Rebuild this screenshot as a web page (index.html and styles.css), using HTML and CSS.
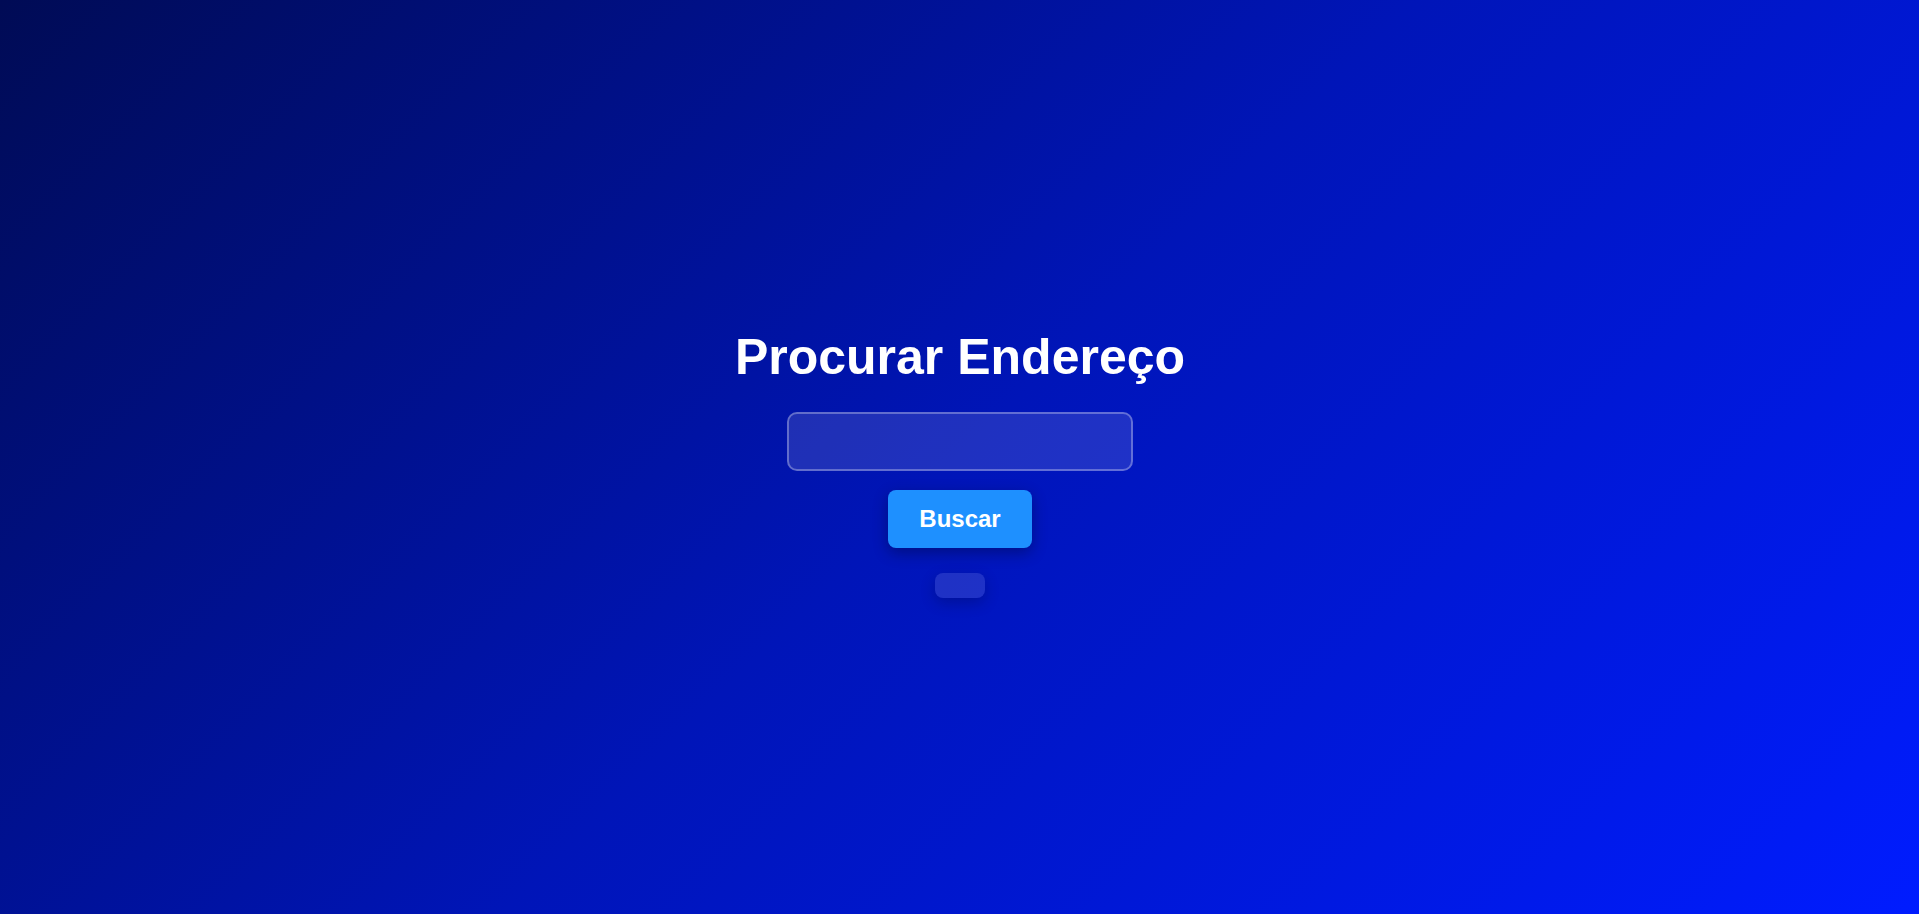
FILE: index.html
```html
<!DOCTYPE html>
<html lang="pt">
<head>
<meta charset="utf-8">
<title>Procurar Endereço</title>
<link rel="stylesheet" href="styles.css">
</head>
<body>
<main class="container">
  <h1 class="title">Procurar Endereço</h1>
  <input class="cep-input" type="text">
  <button class="search-btn" type="button">Buscar</button>
  <div class="result"></div>
</main>
</body>
</html>
```
FILE: styles.css
```css
html, body {
  margin: 0;
  padding: 0;
  height: 100%;
}
body {
  font-family: "Liberation Sans", Arial, sans-serif;
  background: linear-gradient(135deg, #000b55 0%, #0015b8 50%, #001cff 100%);
  color: #fff;
  display: flex;
  align-items: center;
  justify-content: center;
  min-height: 914px;
  padding-left: 1px;
  box-sizing: border-box;
}
.container {
  display: flex;
  flex-direction: column;
  align-items: center;
  margin-top: 12px;
}
.title {
  font-size: 50px;
  font-weight: bold;
  margin: 0 0 26px;
  line-height: 58px;
}
.cep-input {
  box-sizing: border-box;
  width: 346px;
  height: 59px;
  border: 2px solid rgba(255, 255, 255, 0.3);
  border-radius: 10px;
  background: rgba(255, 255, 255, 0.12);
  color: #fff;
  font-size: 20px;
  padding: 0 14px;
  outline: none;
}
.search-btn {
  margin-top: 19px;
  width: 144px;
  height: 58px;
  border: none;
  border-radius: 8px;
  background: #1e90ff;
  color: #fff;
  font-family: "Liberation Sans", Arial, sans-serif;
  font-size: 24px;
  font-weight: bold;
  box-shadow: 0 5px 15px rgba(0, 0, 0, 0.3);
}
.result {
  margin-top: 25px;
  width: 50px;
  height: 25px;
  border-radius: 8px;
  background: rgba(255, 255, 255, 0.12);
  box-shadow: 0 5px 15px rgba(0, 0, 0, 0.2);
}
```
